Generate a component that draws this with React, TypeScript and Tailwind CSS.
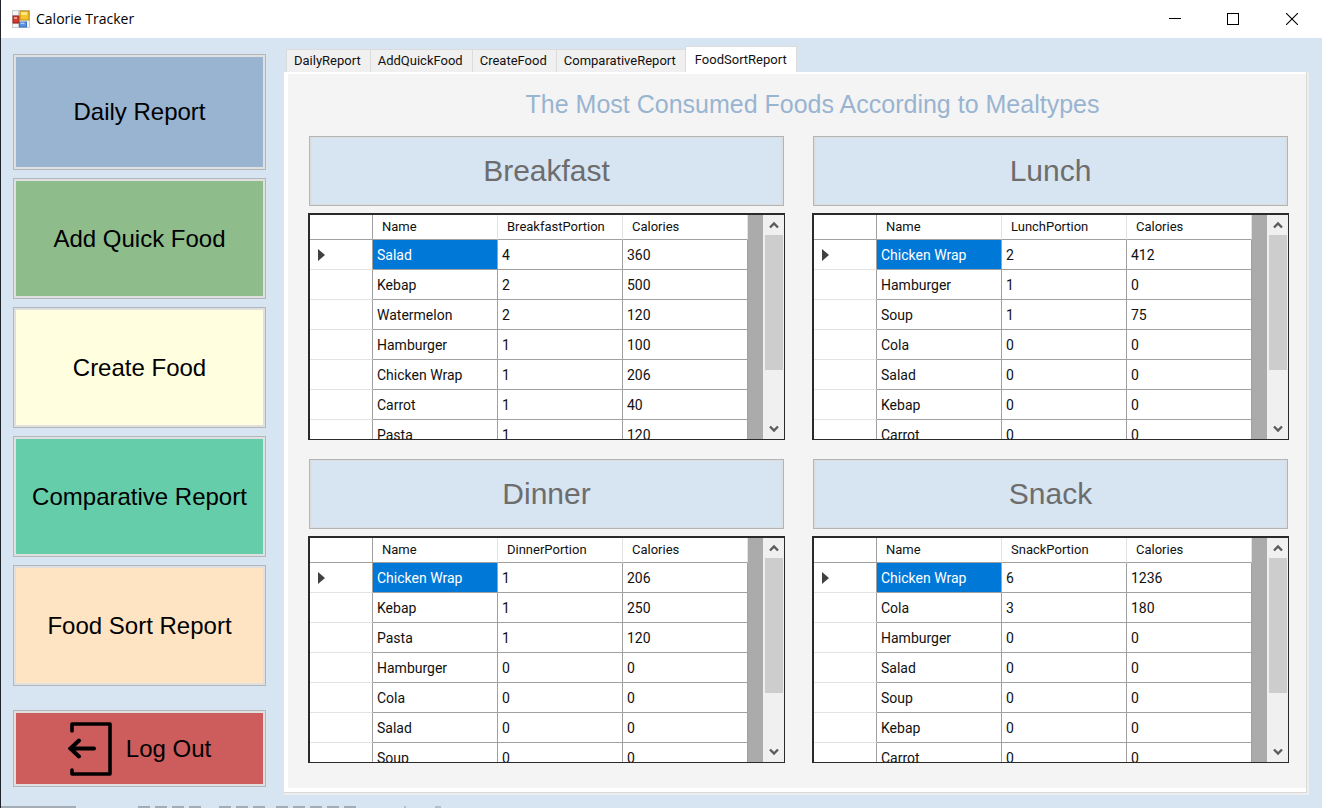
type Row = [string, number, number];

type Meal = { title: string; column: string; rows: Row[] };

const meals: Meal[] = [
  {
    title: 'Breakfast',
    column: 'BreakfastPortion',
    rows: [
      ['Salad', 4, 360],
      ['Kebap', 2, 500],
      ['Watermelon', 2, 120],
      ['Hamburger', 1, 100],
      ['Chicken Wrap', 1, 206],
      ['Carrot', 1, 40],
      ['Pasta', 1, 120],
    ],
  },
  {
    title: 'Lunch',
    column: 'LunchPortion',
    rows: [
      ['Chicken Wrap', 2, 412],
      ['Hamburger', 1, 0],
      ['Soup', 1, 75],
      ['Cola', 0, 0],
      ['Salad', 0, 0],
      ['Kebap', 0, 0],
      ['Carrot', 0, 0],
    ],
  },
  {
    title: 'Dinner',
    column: 'DinnerPortion',
    rows: [
      ['Chicken Wrap', 1, 206],
      ['Kebap', 1, 250],
      ['Pasta', 1, 120],
      ['Hamburger', 0, 0],
      ['Cola', 0, 0],
      ['Salad', 0, 0],
      ['Soup', 0, 0],
    ],
  },
  {
    title: 'Snack',
    column: 'SnackPortion',
    rows: [
      ['Chicken Wrap', 6, 1236],
      ['Cola', 3, 180],
      ['Hamburger', 0, 0],
      ['Salad', 0, 0],
      ['Soup', 0, 0],
      ['Kebap', 0, 0],
      ['Carrot', 0, 0],
    ],
  },
];

const navItems = [
  { label: 'Daily Report', look: 'basis-[116px] bg-[#99b4d1]' },
  { label: 'Add Quick Food', look: 'basis-[121px] bg-[#8fbc8b]' },
  { label: 'Create Food', look: 'basis-[121px] bg-[#ffffe0]' },
  { label: 'Comparative Report', look: 'basis-[121px] bg-[#66cdaa]' },
  { label: 'Food Sort Report', look: 'basis-[121px] bg-[#ffe4c4]' },
];

const tabs = ['DailyReport', 'AddQuickFood', 'CreateFood', 'ComparativeReport', 'FoodSortReport'];

function AppIcon() {
  return (
    <svg width="18" height="18" viewBox="0 0 18 18" aria-hidden="true">
      <rect x="0.5" y="0.5" width="17" height="17" fill="#f4f4f4" stroke="#c9ccd2" />
      <path d="M6.5 1v16M1 5.5h6M1 13.5h6" stroke="#c9ccd2" />
      <rect x="8" y="1" width="9" height="9" fill="#f3c62c" stroke="#c08a14" />
      <rect x="9" y="2" width="6" height="3" fill="#ffe680" />
      <rect x="1" y="6" width="6" height="7" fill="#d0392b" stroke="#9c2a20" />
      <rect x="2" y="7" width="3" height="2" fill="#f09a8c" />
      <rect x="7.5" y="12" width="7" height="5" fill="#5b93e0" stroke="#3b6fc0" />
      <rect x="8.5" y="12.5" width="4" height="1.5" fill="#a9cbf7" />
    </svg>
  );
}

function TitleBar() {
  return (
    <header className="flex h-[38px] items-center bg-white pl-[11px]">
      <AppIcon />
      <h1 className="ml-1.5 font-['Open_Sans',sans-serif] text-sm text-black">Calorie Tracker</h1>
      <div className="ml-auto flex self-stretch">
        <button type="button" aria-label="Minimize" className="flex w-[58px] items-center justify-center">
          <svg width="12" height="12" viewBox="0 0 12 12" aria-hidden="true">
            <path d="M0 5.5h12" stroke="#000" />
          </svg>
        </button>
        <button type="button" aria-label="Maximize" className="flex w-[58px] items-center justify-center">
          <svg width="12" height="12" viewBox="0 0 12 12" fill="none" aria-hidden="true">
            <rect x="0.5" y="0.5" width="11" height="11" stroke="#000" />
          </svg>
        </button>
        <button type="button" aria-label="Close" className="flex w-[60px] items-center justify-center">
          <svg width="12" height="12" viewBox="0 0 12 12" aria-hidden="true">
            <path d="M0 0l12 12M12 0L0 12" stroke="#000" strokeWidth="1.1" />
          </svg>
        </button>
      </div>
    </header>
  );
}

function Sidebar() {
  return (
    <nav className="flex w-[253px] shrink-0 flex-col gap-2" aria-label="Sections">
      {navItems.map((item) => (
        <button
          key={item.label}
          type="button"
          className={`grow border-[3px] border-[#e0e0e0] text-2xl text-black outline outline-1 -outline-offset-1 outline-[#b3b6ba] ${item.look}`}
        >
          {item.label}
        </button>
      ))}
      <button
        type="button"
        className="mt-4 flex h-[77px] items-center justify-center gap-3.5 border-[3px] border-[#e0e0e0] bg-[#cd5c5c] text-2xl text-black outline outline-1 -outline-offset-1 outline-[#b3b6ba]"
      >
        <svg width="44" height="54" viewBox="0 0 44 54" fill="none" stroke="#000" strokeWidth="4" strokeLinecap="round" aria-hidden="true">
          <path d="M4 9V2h38v50H4v-4" strokeLinejoin="round" strokeWidth="3.6" />
          <path d="M26 26.500H3M11 18.500L2.500 26.500L11 34.500" />
        </svg>
        Log Out
      </button>
    </nav>
  );
}

function ScrollBar({ name }: { name: string }) {
  return (
    <div className="flex w-[21px] shrink-0 flex-col bg-[#f0f0f0]">
      <button type="button" aria-label={`Scroll ${name} up`} className="flex h-5 shrink-0 items-center justify-center">
        <svg width="10" height="8" viewBox="0 0 10 8" fill="none" aria-hidden="true">
          <path d="M1 6.500L5 2.500L9 6.500" stroke="#5c5c5c" strokeWidth="2.4" />
        </svg>
      </button>
      <div className="mr-px ml-0.5 h-[135px] bg-[#cdcdcd]" />
      <button type="button" aria-label={`Scroll ${name} down`} className="mt-auto flex h-5 shrink-0 items-center justify-center">
        <svg width="10" height="8" viewBox="0 0 10 8" fill="none" aria-hidden="true">
          <path d="M1 1.500L5 5.500L9 1.500" stroke="#5c5c5c" strokeWidth="2.4" />
        </svg>
      </button>
    </div>
  );
}

function MealPanel({ meal }: { meal: Meal }) {
  return (
    <section>
      <button
        type="button"
        disabled
        className="mx-px block h-[70px] w-[calc(100%-2px)] border-x-[3px] border-y-2 border-[#dcdfe2] bg-[#d7e4f2] text-[30px] leading-none text-[#6d6d6d] outline outline-1 -outline-offset-1 outline-[#b4b4b4]"
      >
        {meal.title}
      </button>
      <div className="mt-[7px] flex h-[227px] overflow-hidden border border-t-2 border-l-2 border-[#2a2a2a] bg-[#ababab]">
        <table className="w-[438px] shrink-0 table-fixed border-separate border-spacing-0 self-start bg-white font-[Roboto,sans-serif] text-sm text-[#111]">
          <colgroup>
            <col className="w-[63px]" />
            <col className="w-[125px]" />
            <col className="w-[125px]" />
            <col className="w-[125px]" />
          </colgroup>
          <thead>
            <tr className="h-[25px] text-left text-[13px]">
              <td className="border-r border-b border-[#a0a0a0]" />
              <th scope="col" className="border-r border-b border-r-[#e3e3e3] border-b-[#a0a0a0] p-0 pl-[9px] font-normal">Name</th>
              <th scope="col" className="border-r border-b border-r-[#e3e3e3] border-b-[#a0a0a0] p-0 pl-[9px] font-normal">{meal.column}</th>
              <th scope="col" className="border-r border-b border-r-[#e3e3e3] border-b-[#a0a0a0] p-0 pl-[9px] font-normal">Calories</th>
            </tr>
          </thead>
          <tbody>
            {meal.rows.map((row, i) => (
              <tr key={row[0]} className="h-[30px]">
                <td className="border-r border-b border-r-[#a0a0a0] border-b-[#e3e3e3] p-0 pl-2">
                  {i === 0 && (
                    <svg width="7" height="12" viewBox="0 0 7 12" aria-hidden="true">
                      <path d="M0 0l7 6l-7 6z" fill="#404040" />
                    </svg>
                  )}
                </td>
                <td className={i === 0 ? 'border-r border-b border-[#a0a0a0] bg-[#0078d7] p-0 pl-1 text-white' : 'border-r border-b border-[#a0a0a0] p-0 pl-1'}>
                  {row[0]}
                </td>
                <td className="border-r border-b border-[#a0a0a0] p-0 pl-1">{row[1]}</td>
                <td className="border-r border-b border-[#a0a0a0] p-0 pl-1">{row[2]}</td>
              </tr>
            ))}
          </tbody>
        </table>
        <div className="min-w-3 flex-1" />
        <ScrollBar name={meal.title} />
      </div>
    </section>
  );
}

export default function App() {
  return (
    <div className="flex min-h-screen flex-col border-l border-[#20242c] bg-[#d7e4f2] font-['Liberation_Sans',Arial,sans-serif]">
      <TitleBar />
      <div className="flex flex-1 pt-4 pr-[13px] pb-[19px] pl-3">
        <Sidebar />
        <main className="-mt-2 -mb-2 ml-[18px] flex flex-1 flex-col">
          <div role="tablist" className="flex h-[26px] items-end pl-0.5 font-[Roboto,sans-serif] text-[13px] text-[#111]">
            {tabs.map((tab) => (
              <button
                key={tab}
                type="button"
                role="tab"
                aria-selected={tab === 'FoodSortReport'}
                className={
                  tab === 'FoodSortReport'
                    ? 'h-[26px] border-x border-t border-[#dcdcdc] bg-white px-[9px]'
                    : 'h-[23px] border-t border-l border-[#dcdcdc] bg-[#f0f0f0] pr-[9px] pl-[7px]'
                }
              >
                {tab}
              </button>
            ))}
          </div>
          <div className="flex-1 border-r-2 border-b-2 border-[#eceef0]">
            <div className="h-full border-r border-b border-[#d9d9d9]">
              <div className="h-full border-4 border-t-2 border-r-0 border-white bg-[#f4f4f4] pt-[14px] pr-[17px] pb-5 pl-[20px]">
                <h2 className="pl-7 text-center text-[25px] leading-8 text-[#99b4d1]">
                  The Most Consumed Foods According to Mealtypes
                </h2>
                <div className="mt-4 grid grid-cols-2 gap-x-[27px] gap-y-[19px]">
                  {meals.map((meal) => (
                    <MealPanel key={meal.title} meal={meal} />
                  ))}
                </div>
              </div>
            </div>
          </div>
        </main>
      </div>
      <svg className="h-0.5 w-full shrink-0" height="2" aria-hidden="true">
        <path d="M0 1h75" stroke="#a4acb5" strokeWidth="2" />
        <path d="M137 1h68M218 1h46M275 1h84" stroke="#a3abb5" strokeWidth="2" strokeDasharray="12 5" />
        <path d="M403 1h2M434 1h6" stroke="#b5bec9" strokeWidth="2" />
      </svg>
    </div>
  );
}
